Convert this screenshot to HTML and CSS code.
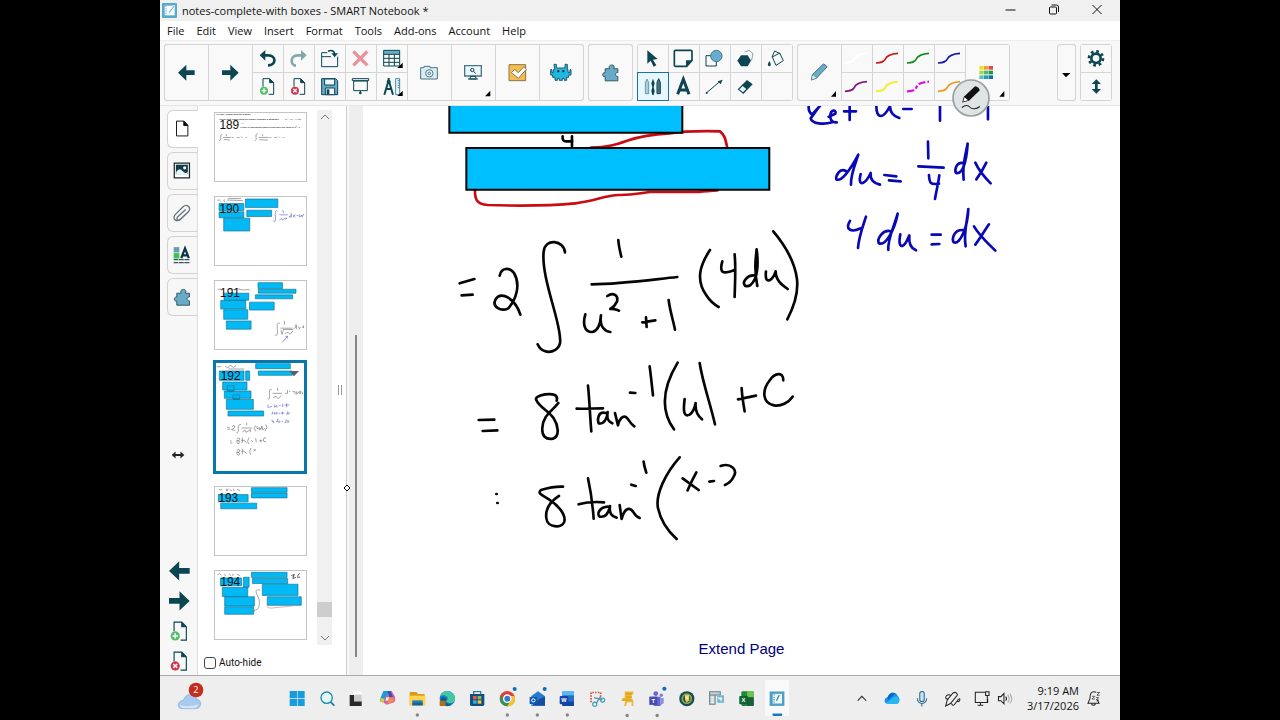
FILE: index.html
```html
<!DOCTYPE html>
<html lang="en">
<head>
<meta charset="utf-8">
<title>notes-complete-with boxes - SMART Notebook</title>
<link rel="stylesheet" href="styles.css">
</head>
<body>
<svg class="defs" aria-hidden="true">
  <defs>
    <g id="page-add"><path d="M5 26V2h20l12 12v35H22M25 2v12h12" class="line"/><path d="M25 2v12h12z" class="dark"/><circle cx="8" cy="38" r="12" fill="#52bf68"/><path d="M8 31v14M1 38h14" class="white"/></g>
    <g id="page-del"><path d="M5 26V2h20l12 12v35H22M25 2v12h12" class="line"/><path d="M25 2v12h12z" class="dark"/><circle cx="8" cy="38" r="12" fill="#cc3a52"/><path d="M3 33l10 10M13 33L3 43" class="white"/></g>
    <path id="arrow" d="M0 24L25 0v17h25v14H25v17z"/>
    <path id="puzzle" d="M9 13h14c-4-8 1-12 7-12s10 5 6 12h13v12c-10-1-10 13 0 12v14H9V38c-10 2-11-14 0-13z"/>
    <path id="swoosh" d="M0 31c14-1 24-2 28-12C32 9 40 4 66 2"/>
  </defs>
</svg>
<div class="window">
  <header class="titlebar">
    <svg class="app-icon" viewBox="6 10 45 45"><rect x="6" y="10" width="45" height="45" rx="3" fill="#56aacb"/><path d="M14 18h30v29H14z" fill="#fff"/><path d="M42 16L27 36l-4 7 7-4 15-20z" fill="#4b9cc0" stroke="#fff" stroke-width="2"/><path d="M18 18v29" stroke="#56aacb" stroke-width="3" stroke-dasharray="4 3"/></svg>
    <h1 class="title">notes-complete-with boxes - SMART Notebook *</h1>
    <div class="controls">
      <button class="ctl" aria-label="Minimize"><svg viewBox="0 0 42 21"><path d="M16 10h10"/></svg></button>
      <button class="ctl" aria-label="Restore"><svg viewBox="0 0 42 21"><rect x="17" y="7" width="7" height="7" rx="1"/><path d="M19 5h5q2 0 2 2v5"/></svg></button>
      <button class="ctl" aria-label="Close"><svg viewBox="0 0 42 21"><path d="M17 5l9 9M26 5l-9 9"/></svg></button>
    </div>
  </header>
  <nav class="menu">
    <button>File</button><button>Edit</button><button>View</button><button>Insert</button><button>Format</button><button>Tools</button><button>Add-ons</button><button>Account</button><button>Help</button>
  </nav>

  <div class="toolbar">
    <div class="group">
      <button class="cell big" aria-label="Previous page"><svg viewBox="15 135 129 165"><use href="#arrow" transform="translate(54 194)" class="dark"/></svg></button>
      <button class="cell big" aria-label="Next page"><svg viewBox="147 135 129 165"><use href="#arrow" transform="translate(236 194) scale(-1 1)" class="dark"/></svg></button>
      <div class="grid five">
        <button class="cell" aria-label="Undo"><svg viewBox="279 135 90 81"><path d="M310 166h15c24 0 25 30-1 30" fill="none" stroke="#0c4652" stroke-width="8"/><path d="M299 166l17-16v32z" class="dark"/></svg></button>
        <button class="cell" aria-label="Redo"><svg viewBox="372 135 90 81"><path d="M428 166h-15c-24 0-22 30-5 31" fill="none" stroke="#86a7a9" stroke-width="8"/><path d="M440 166l-17-16v32z" fill="#86a7a9"/></svg></button>
        <button class="cell" aria-label="Open"><svg viewBox="465 135 90 81"><path d="M502 158h-17v42h48v-30M485 170h28" class="line"/><path d="M504 154c12-6 20 0 20 9" fill="none" stroke="#0c4652" stroke-width="5"/><path d="M514 160h20l-10 12z" class="dark"/></svg></button>
        <button class="cell" aria-label="Delete"><svg viewBox="558 135 90 81"><path d="M580 154l42 42M622 154l-42 42" fill="none" stroke="#ea929b" stroke-width="10"/></svg></button>
        <button class="cell" aria-label="Table"><svg viewBox="651 135 90 81"><path d="M671 151h48v12h-48z" fill="#6aa9c8"/><path d="M671 151h48v47h-48zM671 163h48M671 175h48M671 187h48M687 163v35M703 163v35" class="line"/><path d="M728 188v16h-16z"/></svg></button>
        <button class="cell" aria-label="Add page"><svg viewBox="279 219 90 81"><use href="#page-add" transform="translate(304 234)"/></svg></button>
        <button class="cell" aria-label="Delete page"><svg viewBox="372 219 90 81"><use href="#page-del" transform="translate(397 234)"/></svg></button>
        <button class="cell" aria-label="Save"><svg viewBox="465 219 90 81"><path d="M485 236h42l6 6v42h-48z" fill="#67a9c9" stroke="#0c4652" stroke-width="3"/><path d="M494 237h30v18h-30zM496 264h28v20h-28z" fill="#f1f8fb" stroke="#0c4652" stroke-width="3"/><path d="M500 268h8v15h-8z" class="dark"/></svg></button>
        <button class="cell" aria-label="Screen shade"><svg viewBox="558 219 90 81"><path d="M577 236h49v6h-49zM581 243h41v29h-41zM601 272v6" class="line"/><circle cx="601" cy="279" r="4" class="dark"/></svg></button>
        <button class="cell" aria-label="Measurement tools"><svg viewBox="651 219 90 81"><path d="M686 234v10M685 244l-12 40M687 244l12 40M677 267h18" fill="none" stroke="#0c4652" stroke-width="6"/><circle cx="686" cy="245" r="6" class="dark"/><path d="M707 236h12v48h-12zM713 242h6M713 249h6M713 256h6M713 263h6" fill="#edf8fb" stroke="#478aa4" stroke-width="3"/><path d="M728 272v16h-16z"/></svg></button>
      </div>
      <button class="cell big" aria-label="Capture"><svg viewBox="744 135 129 165"><path d="M782 203h10v-4h18v4h22v34h-50z" fill="#dcecf2" stroke="#477684" stroke-width="3"/><circle cx="808" cy="220" r="11" fill="#eef8fb" stroke="#477684" stroke-width="3"/><circle cx="808" cy="220" r="4" fill="none" stroke="#477684" stroke-width="3"/></svg></button>
      <button class="cell big" aria-label="Display"><svg viewBox="876 135 129 165"><path d="M914 197h50v31h-50z" fill="#eef8fb" stroke="#477684" stroke-width="4"/><path d="M932 229h14l3 8h-20zM924 237h30" class="line"/><circle cx="937" cy="210" r="5" class="line"/><path d="M941 214l6 7" class="line"/><path d="M991 272v17h-16z"/></svg></button>
      <button class="cell big" aria-label="Assessment"><svg viewBox="19 135 129 165"><path d="M58 194h50v48H58z" fill="#f4bd51" stroke="#8d7548" stroke-width="3"/><path d="M65 218l10-10 11 10 17-18 7 8-24 27z" fill="#fff" stroke="#8d7548" stroke-width="3"/></svg></button>
      <button class="cell big" aria-label="Game activity"><svg viewBox="151 135 129 165"><path d="M193 193h7v11h26v-11h7v15h2v9h6v-8h3v16h-7v7h-6v9h-7v-6h-6v6h-9v-6h-6v6h-7v-9h-7v-7h-6v-16h4v8h5v-9h3z" fill="#22b8e0" stroke="#1e596f" stroke-width="3"/><path d="M203 210h6v7h-6zM218 210h6v7h-6z" fill="#073c50"/></svg></button>
    </div>
    <div class="group">
      <button class="cell big" aria-label="Add-ons"><svg viewBox="295 135 129 165"><use href="#puzzle" transform="translate(335 194) scale(.95)" class="piece"/></svg></button>
    </div>
    <div class="group">
      <div class="grid five">
        <button class="cell" aria-label="Select"><svg viewBox="443 135 90 81"><path d="M471 151l31 26-14 2 10 17-8 4-9-18-10 9z" class="dark"/></svg></button>
        <button class="cell" aria-label="Page"><svg viewBox="536 135 90 81"><path d="M555 151h47q3 0 3 3v27l-16 18h-34q-3 0-3-3v-42q0-3 3-3z" fill="none" stroke="#0c4652" stroke-width="5"/><path d="M587 200v-19h19z" class="dark"/></svg></button>
        <button class="cell" aria-label="Shapes"><svg viewBox="630 135 90 81"><path d="M648 167h31v31h-31z" class="line"/><circle cx="679" cy="168" r="17" fill="#66add0" stroke="#477684" stroke-width="3"/></svg></button>
        <button class="cell" aria-label="Polygons"><svg viewBox="723 135 90 81"><path d="M764 156l13-5 12 10-4 19-12 3" fill="none" stroke="#477684" stroke-width="2"/><path d="M753 166h20l10 16-10 17h-20l-11-17z" class="dark"/></svg></button>
        <button class="cell" aria-label="Fill"><svg viewBox="816 135 90 81"><path d="M847 171l22-12 11 23-22 14zM846 171l8-18 16 8" class="line"/><path d="M838 183q-9 14 0 16 9-2 0-16z" class="dark"/></svg></button>
        <button class="cell active" aria-label="Pens"><svg viewBox="442 219 90 81"><path d="M469 237l5 10v34h-10v-34z" fill="#a4cfe1" stroke="#477684" stroke-width="2"/><path d="M487 236l5 14-3 12 3 11-3 12h-4l-3-12 3-11-3-12z" class="dark"/><path d="M504 236l5 11v34h-10v-34z" fill="#54757d" stroke="#0c4652" stroke-width="3"/></svg></button>
        <button class="cell" aria-label="Text"><svg viewBox="536 219 90 81"><path d="M562 283l17-45 17 45M567 270h24" fill="none" stroke="#0c4652" stroke-width="9"/></svg></button>
        <button class="cell" aria-label="Lines"><svg viewBox="630 219 90 81"><path d="M649 279l40-34" class="line"/><path d="M698 239l-6 14-9-9z" class="dark"/><circle cx="650" cy="279" r="3" class="dark"/></svg></button>
        <button class="cell" aria-label="Eraser"><svg viewBox="723 219 90 81"><path d="M743 268l28-28 17 13-28 29z" class="dark"/><path d="M748 268l10-10 11 9-10 10z" fill="#e9f6fa"/></svg></button>
        <span class="cell"></span>
      </div>
    </div>
    <div class="group palette">
      <button class="cell big" aria-label="Pen types"><svg viewBox="-7 135 129 165"><path d="M33 240l4-17 32-31q7 1 11 9l-31 33z" fill="#69abc9" stroke="#477684" stroke-width="3"/><path d="M37 223l12 11-16 6z" fill="#edf8fb" stroke="#477684" stroke-width="2"/><path d="M107 273v17H92z"/></svg></button>
      <div class="grid four">
        <button class="cell" aria-label="White pen"><svg viewBox="124 135 90 81"><use href="#swoosh" class="pen p-white" transform="translate(133 158)"/></svg></button>
        <button class="cell" aria-label="Red pen"><svg viewBox="217 135 90 81"><use href="#swoosh" class="pen p-red" transform="translate(226 158)"/></svg></button>
        <button class="cell" aria-label="Green pen"><svg viewBox="310 135 90 81"><use href="#swoosh" class="pen p-green" transform="translate(319 158)"/></svg></button>
        <button class="cell" aria-label="Blue pen"><svg viewBox="403 135 90 81"><use href="#swoosh" class="pen p-blue" transform="translate(412 158)"/></svg></button>
        <button class="cell" aria-label="Purple pen"><svg viewBox="124 219 90 81"><use href="#swoosh" class="pen p-purple" transform="translate(133 243)"/></svg></button>
        <button class="cell" aria-label="Yellow highlighter"><svg viewBox="217 219 90 81"><use href="#swoosh" class="pen p-yellow" transform="translate(226 243)"/></svg></button>
        <button class="cell" aria-label="Dashed magenta pen"><svg viewBox="310 219 90 81"><use href="#swoosh" class="pen p-magenta" transform="translate(319 243)"/></svg></button>
        <button class="cell" aria-label="Orange pen"><svg viewBox="403 219 90 81"><use href="#swoosh" class="pen p-orange" transform="translate(412 243)"/></svg></button>
      </div>
      <button class="cell big" aria-label="Colors"><svg viewBox="498 135 129 165"><path d="M538 198h13v11h-13z" fill="#e8e32b"/><path d="M552 198h13v11h-13z" fill="#ef9a45"/><path d="M566 198h13v11h-13z" fill="#dc4d43"/><path d="M538 212h13v11h-13z" fill="#a8d454"/><path d="M552 212h13v11h-13z" fill="#55b95b"/><path d="M566 212h13v11h-13z" fill="#1d9a46"/><path d="M538 226h13v11h-13z" fill="#60bfb3"/><path d="M552 226h13v11h-13z" fill="#2799bb"/><path d="M566 226h13v11h-13z" fill="#176da4"/><path d="M613 273v17h-15z"/></svg></button>
      <svg class="pen-cursor" viewBox="457 238 112 112"><circle cx="513" cy="294" r="53" fill="#dfe4e4" stroke="#9a9f9f" stroke-width="5"/><path d="M487 307l5-17 33-31q11 2 14 12l-32 31z" fill="#101010"/><path d="M490 304l4-12 10 9z" fill="#fff"/><path d="M486 322c13-10 20-6 25 0s18 5 28-3" fill="none" stroke="#222" stroke-width="3"/></svg>
    </div>
    <div class="group right">
      <button class="cell narrow" aria-label="More tools"><svg viewBox="777 135 51 165"><path d="M789 219h25l-13 13z"/></svg></button>
    </div>
    <div class="group">
      <div class="grid">
        <button class="cell" aria-label="Settings"><svg viewBox="844 135 90 81"><circle cx="889" cy="175" r="14" fill="none" stroke="#0c4652" stroke-width="8"/><circle cx="889" cy="175" r="21" fill="none" stroke="#0c4652" stroke-width="8" stroke-dasharray="8 8.5"/></svg></button>
        <button class="cell" aria-label="Move toolbar"><svg viewBox="844 219 90 81"><path d="M890 238l14 14h-10v15h10l-14 14-14-14h10v-15h-10z" class="dark"/></svg></button>
      </div>
    </div>
  </div>

  <main class="work">
    <aside class="rail">
      <div class="tabs">
        <button class="tab on" aria-label="Page sorter"><svg viewBox="24 30 90 114"><path d="M50 62h24l12 12v35H50zM73 62v14h13" fill="none" stroke="#111" stroke-width="3"/><path d="M73 62v14h13z"/></svg></button>
        <button class="tab" aria-label="Gallery"><svg viewBox="24 156 90 114"><path d="M43 188h48v47H43z" fill="#fff" stroke="#1c2a2e" stroke-width="4"/><path d="M48 193h38v30H48z" fill="#123a47"/><path d="M49 216q10-15 20-3t16 2v9H49z" fill="#e9f6fa"/><circle cx="76" cy="203" r="5" fill="#fff"/></svg></button>
        <button class="tab" aria-label="Attachments"><svg viewBox="24 282 90 114"><path d="M79 328l-25 23c-7 8 2 15 9 8l24-23c13-13-4-28-17-16l-24 24c-12 15 5 25 17 14l20-19" fill="none" stroke="#65757a" stroke-width="4"/></svg></button>
        <button class="tab" aria-label="Properties"><svg viewBox="24 408 90 114"><path d="M41 440h18v17H41z" fill="#679eb4"/><path d="M41 459h18v17H41z" fill="#3bc154"/><path d="M65 475l12-31 12 31M69 466h16" fill="none" stroke="#0c3644" stroke-width="7"/><path d="M41 480h52M41 489h52" stroke="#36535b" stroke-width="4" stroke-dasharray="15 2"/></svg></button>
        <button class="tab" aria-label="Add-ons"><svg viewBox="24 10 90 114"><use href="#puzzle" class="piece" transform="translate(42 42)"/></svg></button>
      </div>
      <button class="swap" aria-label="Move sidebar"><svg viewBox="0 0 40 24"><path d="M2 12L13 2v7h14V2l11 10-11 10v-7H13v7z" fill="#222"/></svg></button>
      <div class="page-actions">
        <button aria-label="Previous page"><svg viewBox="0 0 62 60"><path d="M0 30L30 1v20h31v17H30v20z" class="dark"/></svg></button>
        <button aria-label="Next page"><svg viewBox="0 0 62 60"><path d="M61 30L31 1v20H0v17h31v20z" class="dark"/></svg></button>
        <button aria-label="Add page"><svg viewBox="0 0 62 66"><use href="#page-add" transform="translate(9 4) scale(1.15)"/></svg></button>
        <button aria-label="Delete page"><svg viewBox="0 0 62 66"><use href="#page-del" transform="translate(9 4) scale(1.15)"/></svg></button>
      </div>
    </aside>

    <section class="sorter">
      <div class="list">
        <div class="thumbs">
          <button class="thumb" aria-label="Page 189"><svg viewBox="165 40 273 206">
            <text x="168" y="47" class="tiny bold">Fri-day: Completing the Square</text>
            <text x="177" y="60" class="tiny bold">Recall that completing the square changes a quadratic</text><text x="375" y="60" class="tiny">px² + bx + c into</text>
            <text x="240" y="73" class="tiny">+ c</text><text x="240" y="86" class="tiny bold">e have a few antiderivatives that have the form of x² + 1</text>
            <text x="177" y="90" class="num">189</text>
            <g class="hand dim"><path d="M186 104q-8 2-5 10t-5 10M188 114h24M198 104v6M191 120l18 2M293 102q-8 2-5 11t-4 12M296 114h30M308 104v6M298 121l26 1"/></g>
            <text x="214" y="116" class="tiny">dx = tan⁻¹x + C</text><text x="328" y="116" class="tiny">dx = sin⁻¹x + C</text></svg></button>
          <button class="thumb" aria-label="Page 190"><svg viewBox="165 291 273 206">
            <g class="box"><path d="M176 311h75v21h-75zM256 297h98v26h-98zM260 331h75v19h-75zM176 336h75v18h-75zM190 355h79v39h-79z"/></g>
            <path class="hand dim" d="M171 302l5-3 5 5M192 298q-5 5 3 8m5-6l48 2m-45-7l40 1"/>
            <path class="hand blue" d="M353 334c-8-8-7 12-6 24 0 9-4 10-7 4M369 330l2 10M359 345h25M359 361l6-5 3 5 7-5 7-1M376 359l5-4M393 346l-5 6 8-1-2-12M400 345l7 6M407 344l-7 8M411 347h5M420 344v8l7-7v7l6-9"/>
            <text x="177" y="339" class="num">190</text></svg></button>
          <button class="thumb" aria-label="Page 191"><svg viewBox="165 15 273 206">
            <g class="box"><path d="M294 20h74v18h-74zM295 40h114v12h-114zM286 57h113v12h-113zM191 52h75v21h-75zM181 74h76v26h-76zM268 79h75v24h-75zM190 102h73v29h-73zM198 136h75v25h-75z"/></g>
            <path class="hand dim" d="M172 40h10M202 41l10-3 10 4 8-4 18 4 20-1M360 143c-12-3-7 12-7 25 0 12-3 13-8 10M374 136v12M362 158h36M363 164l4 13 4-15h29M376 174l9-4 6 6 9-10M401 160l8-6v-7l2 14M414 153l7 6M417 162l6-7M427 155h6M432 149v8"/><path class="hand blue" d="M368 201l15-19-6 1M383 182l1 7"/>
            <text x="179" y="63" class="num">191</text></svg></button>
          <button class="thumb current" aria-label="Page 192"><svg viewBox="170 265 264 324">
            <g class="box"><path d="M289 267h104v15H289zM297 289h102v13H297zM180 289h74v28h-74zM259 289h12v28h-12zM190 322h73v24h-73zM195 349h80v22h-80zM201 374h81v30h-81zM206 409h107v15H206zM204 333h20v17h-20zM221 361h20v13h-20z"/></g>
            <path d="M390 289h29l-15 16z" fill="#53646a"/>
            <path class="hand dim" d="M172 276h14M198 275l7 5 8-8 9 6 8-5M207 283h47M337 345c-8-6-7 10-6 20 0 8-2 10-6 7M355 339v10M340 356h28M342 369l8-4 6 7 10-9M377 356l8 0-1-10M389 350h4M399 351h8v8M412 350v9l8-9v8M424 348v10M429 351v8M203 459h8M204 464h8M218 456q10-9 7 4l-9 5 12 2M245 450q-9-3-8 12t-6 12M262 444v8M247 460h32M249 472l8-6 3 7 12-7M273 463v10M288 452q-6 10 1 18M293 454v8l7-3v8M306 460q-8 3-2 5l4-11 2 12 7-6M319 449q8 10-2 20M212 499h5M213 505h6M233 493q8-7 8 1t-9 4q1 12 7 9t-4-11M249 489v16M246 497h8l8 7M269 488q-8 13-1 20M276 496l5 6M289 490l2 13M300 498h9M304 494v9M320 489q-8-1-8 7t8 4M233 527q8-7 8 1t-9 4q1 12 7 9t-4-11M249 522v17M246 530h9l7 8M275 520q-8 11-1 20M283 523l6 7M289 523l-6 7"/>
            <path class="hand blue" d="M326 390q-2 12 5 7l7-2M346 390v8l7-6v7M359 393h5M370 387v10M375 391h15M382 386v12M336 418h4v-7M346 412v7l7-6v7M358 416h5M369 411v9M366 415h9M380 418h5v-8M390 412l-3 8M338 435v5h5v6M350 441h5v-9M359 437v7l4-4M367 440h4M375 443h5v-9M389 437l-5 7M384 437l5 7"/>
            <text x="184" y="315" class="num">192</text></svg></button>
          <button class="thumb" aria-label="Page 193"><svg viewBox="165 20 273 206">
            <g class="box"><path d="M274 22h108v14H274zM274 38h108v15H274zM174 43h90v22h-90zM181 69h109v17H181z"/></g>
            <path class="hand dim" d="M175 27l6 2 5-3M198 25v7M203 25l-2 8M208 27l7 5M219 25l3 7M230 27l10 4"/><text x="174" y="66" class="num">193</text></svg></button>
          <button class="thumb" aria-label="Page 194"><svg viewBox="165 270 273 206">
            <g class="box"><path d="M274 274h108v16H274zM277 293h107v15H277zM307 310h108v34H307zM322 348h103v26H322zM180 291h64v24h-64zM250 289h17v30h-17zM186 320h77v27h-77zM193 348h90v28h-90zM193 378h88v23h-88z"/></g>
            <path class="hand dim" d="M171 281l6-3 6 4M194 279v7M206 278l7 7M218 278v7M230 280l10 4M301 328c-15-4-16 3-8 18s8 38-6 42-8 6-4 5"/><path class="hand" d="M394 284l8-3-3 11M404 279l-3 14 8-4M421 277q-8 3-7 13l8-2"/><path class="hand rose" d="M322 377q-1 8 24 4l35-3 27-4"/><text x="180" y="315" class="num">194</text></svg></button>
        </div>
        <div class="scroll"><svg viewBox="0 0 15 14"><path d="M4 9l4-4 4 4"/></svg><span class="grip"></span><svg viewBox="0 0 15 14"><path d="M4 5l4 4 4-4"/></svg></div>
        <span class="handle"></span>
      </div>
      <label class="autohide"><input type="checkbox"> <span>Auto-hide</span></label>
    </section>
    <div class="splitter"><span class="track"></span>
      <svg class="diamond" viewBox="0 0 8 8"><path d="M4 1l3 3-3 3-3-3z"/></svg>
    </div>

    <section class="canvas">
      <svg class="ink" viewBox="363 106 757 524" role="img" aria-label="Handwritten integration steps">
        <g transform="translate(440 100) scale(.3333)">
          <path d="M453 143c50-1 75-9 108-21 47-16 90-20 128-22 50-8 102-7 151-6 15 11 17 27 22 50M105 269c-1 28 4 43 38 46 91 3 170 4 263-5 61-7 88-24 130-25 40 1 60-5 94-9h130c23 0 42-3 72-5" class="stroke red"/>
          <path d="M368 109q-2 16 12 15h17M396 109v30" class="stroke"/>
          <path d="M28-10h699V98H28zM79 144h909v125H79z" fill="#00bfff" stroke="#050505" stroke-width="6"/>
        </g>
        <g transform="translate(780 100) scale(.3333)" class="stroke blue">
          <path d="M87 14c-3 13 0 23 9 30l28-31M124 13c-12 12-20 27-32 42 4 16 39 20 64 12M146 50l20-9c4-11-10-13-14-1-4 15 2 28 18 27M209 15v45M192 34h36M289 17c0 22 5 32 15 31 12-2 20-18 26-30 0 18 8 30 28 36M370 27h25M480 16v46M624 16v42"/>
          <path d="M198 213c-21-10-31 17-29 25 14 8 39-23 66-74-8 24-24 62-22 90M242 222c-5 18-3 29 6 27 10-3 17-15 24-30-2 18 8 30 28 35M313 225l36 4M327 241l35 3M444 125l1 50M415 199l76 4M447 225c1 23 3 30 30 26M478 226c-4 30-9 46-13 71M551 189c-24-4-27 22-23 30 18 4 31-25 35-88-7 35-17 66-12 108M586 188c13 29 30 46 46 62M619 188c-10 21-18 34-30 50"/>
          <path d="M210 363c-15 23 1 37 32 22M258 350c-10 31-21 58-24 94M333 394c-24-7-42 22-37 35 20 12 48-40 57-88-12 42-31 78-28 109M361 403c-5 26-2 37 8 34 10-5 14-21 19-31-2 24 4 39 20 45M455 404h27M455 433l23-1M548 390c-26-1-33 25-27 37 20 9 43-50 44-100-4 43-15 73-8 112M582 379c17 29 43 52 64 73M627 373c-14 20-27 43-41 61"/>
        </g>
        <g transform="translate(450 225) scale(.3333)" class="stroke">
          <path d="M29 175l44-13M35 211l33-2M149 152c5-25 29-26 43-8 21 35 6 80-17 106-22 11-49-4-39-25 17-32 61-1 75 44M345 82c-2-35-60-46-64-2-8 76 48 202 49 260 6 34-28 45-46 38-10-2-16-9-21-20M505 45c1 18 5 34 9 50M425 178c87-1 171-13 257-22M472 213c18-12 34-2 29 17-5 11-13 18-20 22 12-2 16 2 26 5M406 268c-8 27-4 54 21 53 15-3 24-24 26-50-4 26 4 46 28 50M577 292l39-6M588 277l2 29M656 225c4 34 14 62 19 89M780 75c-31 47-43 90-11 136 9 14 22 27 37 35M817 109c-10 36 2 40 38 25M854 88c4 42 1 84 0 128M917 152c-26-5-41 20-32 30 22 9 46-27 35-109-4 35-7 62 2 110M948 140c-2 20 1 30 12 25 8-4 13-14 17-26 1 27 17 40 36 53M970 19c36 43 64 89 71 143 5 43-8 81-29 121"/>
        </g>
        <g transform="translate(460 355) scale(.3333)" class="stroke">
          <path d="M56 195l47-1M68 228l44-2M290 137c5-17-9-22-35-19-21 4-30 10-26 17 9 22 36 31 52 55 13 20 20 53-2 61-22 4-34-9-32-32 1-37 30-51 48-75M384 92c5 49 6 92 10 137M350 161c25 1 53-1 79-1M437 174c-23-7-25 20-21 31 18 4 26-18 27-34-3 22 2 30 14 34M465 174l9 37c2-17 15-32 25-24 8 6 10 18 24 27M510 113l16 1M569 34c4 30 7 59 10 87M653 23c-35 58-61 131-11 200M674 132c-5 38-2 55 15 47 12-9 16-24 18-35-2 22 3 36 19 49M719 24c9 59 32 122 46 184M834 133l54-11M845 99c1 24 5 47 9 70M970 76c0-28-26-21-40-1-26 32-22 70 12 76 20 4 44-8 56-26"/>
          <path d="M109 417h1M112 444h1M309 395c-27-1-46 4-66 10-13 12 7 16 25 29 27 18 50 44 45 66-7 22-52 18-54-11-4-30 15-51 38-66M384 370c8 36 14 79 17 121M356 448c28-8 52-8 76-6M444 455c-27 1-34 24-25 30 20 3 28-15 31-32-3 22 4 30 20 35M479 450l6 42c7-27 21-40 34-22 6 10 9 15 20 19M514 389l13 4M551 320c1 13 5 23 8 33M659 307c-42 47-73 111-65 152 8 38 26 66 56 93M668 370l48 35M709 352c-11 20-19 37-26 54M748 380l14-2M782 333c29-10 54 10 38 34-5 11-13 18-25 23"/>
        </g>
      </svg>
      <div class="extend"><button>Extend Page</button></div>
    </section>
  </main>

  <footer class="taskbar">
    <button class="weather" aria-label="Weather"><svg viewBox="50 0 90 132"><path d="M70 98c-21 0-15-25 3-25 3-22 35-24 39-3 18 2 15 28-3 28z" fill="#a9caf0" stroke="#7ca8db" stroke-width="2"/><path d="M62 87q25 8 55-2-3 11-13 12H70q-7-1-8-10z" fill="#d6e5f7"/><circle cx="110" cy="42" r="22" fill="#c42c1b"/><text x="110" y="52" class="badge">2</text></svg></button>
    <div class="pins">
      <button aria-label="Start"><svg viewBox="367 0 90 132"><path d="M390 45h22v22h-22zM414 45h21v22h-21zM390 69h22v21h-22zM414 69h21v21h-21z" fill="#199be0"/></svg></button>
      <button aria-label="Search"><svg viewBox="457 0 90 132"><circle cx="501" cy="65" r="17" fill="#e5f7f4" stroke="#198cae" stroke-width="4"/><path d="M513 78l11 11" stroke="#1770b8" stroke-width="5"/></svg></button>
      <button aria-label="Task view"><svg viewBox="547 0 90 132"><path d="M581 46h25v29h-25z" fill="#fff"/><path d="M570 57h13v19h23v14h-36z" fill="#292929"/><path d="M583 56h23v20h-23z" fill="#ccc"/></svg></button>
      <button aria-label="Copilot"><svg viewBox="637 0 90 132"><path d="M671 45h22l-12 33h-18q-5-6 0-13z" fill="#159ed0"/><path d="M687 45h9l10 17q4 18-10 19l-15 5-10-7z" fill="#dc5aa1"/><path d="M663 66l12 2-5 14-8-8z" fill="#eac72f"/><path d="M687 65h17l-4 12-17 7z" fill="#f38c4a"/><path d="M683 45h10l7 18h-11z" fill="#2859bd"/><path d="M680 64h8l-3 10h-8z" fill="#eee"/></svg></button>
      <button aria-label="File Explorer"><svg viewBox="727 0 90 132"><path d="M750 48h20l5 6h20v34h-45z" fill="#d99b18"/><path d="M750 59h47v29h-47z" fill="#ffd34c"/><path d="M758 73h31v15h-31z" fill="#267fba"/><path d="M758 80h31v8h-31z" fill="#0f649e"/><circle class="run" cx="773" cy="117" r="5"/></svg></button>
      <button aria-label="Edge"><svg viewBox="817 0 90 132"><circle cx="863" cy="68" r="23" fill="#167cba"/><path d="M841 61c7-25 45-20 45 7 0 15-18 16-27 9 14-12-3-25-18-16z" fill="#42c9a4"/><path d="M848 63q-11 18 7 27l22-3q-24-3-17-19z" fill="#0a559c"/><path d="M840 74h18v16h-18z" fill="#ad711c"/></svg></button>
      <button aria-label="Microsoft Store"><svg viewBox="907 0 90 132"><path d="M931 54h43v31q0 5-5 5h-33q-5 0-5-5z" fill="#114f7f"/><path d="M942 54v-7h21v7" fill="none" stroke="#2382b4" stroke-width="4"/><path d="M940 60h11v10h-11z" fill="#ef5541"/><path d="M954 60h11v10h-11z" fill="#8abe45"/><path d="M940 73h11v10h-11z" fill="#3aaae1"/><path d="M954 73h11v10h-11z" fill="#f5c540"/></svg></button>
      <button aria-label="Chrome"><svg viewBox="997 0 90 132"><circle cx="1043" cy="68" r="23" fill="#d94236"/><path d="M1023 57q-8 30 20 34l10-17-10 5q-12-2-14-12z" fill="#249b52"/><path d="M1043 91l10-18 1-13h11q6 30-22 31z" fill="#f5c42c"/><circle cx="1043" cy="68" r="11" fill="#3578d5" stroke="#fff" stroke-width="4"/><circle class="note" cx="1065" cy="39" r="6"/><circle class="run" cx="1043" cy="117" r="5"/></svg></button>
      <button aria-label="Outlook"><svg viewBox="1087 0 90 132"><path d="M1114 61l21-15 21 15v28h-42z" fill="#267bd1"/><path d="M1114 61l23 14 19-14v28h-42z" fill="#65c2f0"/><path d="M1133 73l23-12v28h-40z" fill="#174da0"/><path d="M1110 63h22v21h-22z" fill="#0d58b0"/><circle cx="1121" cy="73" r="5" fill="none" stroke="#fff" stroke-width="3"/><circle class="note" cx="1155" cy="39" r="6"/><circle class="run" cx="1133" cy="117" r="5"/></svg></button>
      <button aria-label="Word"><svg viewBox="1177 0 90 132"><rect x="1208" y="45" width="35" height="45" rx="3" fill="#226fcc"/><path d="M1208 45h35v13h-35z" fill="#60b7ed"/><path d="M1208 77h35v13h-35z" fill="#1146a0"/><rect x="1200" y="60" width="26" height="25" rx="3" fill="#1546a3"/><text x="1213" y="79" class="logo">W</text><circle class="run" cx="1223" cy="117" r="5"/></svg></button>
      <button aria-label="Snipping Tool"><svg viewBox="8 2 87 128"><path d="M34 78V50h28v12" fill="none" stroke="#c9483b" stroke-width="5" stroke-dasharray="4 4"/><path d="M43 65l24 6M49 82l13-20" stroke="#5d8fa2" stroke-width="4"/><circle cx="45" cy="84" r="6" fill="none" stroke="#3398bc" stroke-width="3"/><circle cx="68" cy="72" r="6" fill="none" stroke="#3398bc" stroke-width="3"/></svg></button>
      <button aria-label="Lumio"><svg viewBox="95 2 87 128"><path d="M132 47h25v9h-5v18h5v15h-5V78h-13l-4 11h-5l4-14h-12l4-9 6-1z" fill="#efb52c"/><path d="M135 54h18M136 63h17M126 72h30" stroke="#d99a16" stroke-width="3"/><circle class="run" cx="139" cy="117" r="5"/></svg></button>
      <button aria-label="Teams"><svg viewBox="182 2 87 128"><circle cx="222" cy="53" r="7" fill="#6468cf"/><circle cx="238" cy="58" r="5" fill="#7f83d8"/><path d="M211 62h25v27h-18q-7-3-7-9z" fill="#6267cf"/><path d="M236 66h9v15l-8 5z" fill="#8b8ee3"/><path d="M203 62h23v24h-23z" fill="#444bb2"/><text x="215" y="80" class="logo">T</text><circle class="note" cx="247" cy="39" r="6"/><circle class="run" cx="226" cy="117" r="5"/></svg></button>
      <button aria-label="Camera app"><svg viewBox="269 2 87 128"><circle cx="312" cy="68" r="22" fill="#174d50"/><circle cx="312" cy="68" r="13" fill="none" stroke="#8fa84e" stroke-width="5"/><path d="M306 57h13v17l-8 4-4-6z" fill="#e7cb58"/><circle cx="312" cy="65" r="5" fill="#f7e694"/></svg></button>
      <button aria-label="Phone Link"><svg viewBox="356 2 87 128"><path d="M378 48h31v9h-31zM378 57h16v27h-16z" fill="#c7d4d6" stroke="#687d83" stroke-width="3"/><path d="M400 58h20v22h-20z" fill="#74b9d4"/><path d="M405 63v5h10M411 63v12M383 64h7M383 71h7M383 78h7" fill="none" stroke="#fff" stroke-width="3"/></svg></button>
      <button aria-label="Excel"><svg viewBox="443 2 87 128"><rect x="470" y="46" width="36" height="43" rx="4" fill="#26853e"/><path d="M487 46h19v18h-19z" fill="#6ec54d"/><path d="M487 64h19v25h-19z" fill="#165f39"/><rect x="464" y="60" width="25" height="24" rx="2" fill="#116332"/><text x="476" y="79" class="logo">X</text></svg></button>
      <button class="open" aria-label="SMART Notebook"><svg viewBox="530 2 87 128"><path d="M552 47h43v42h-43z" fill="#4f9fc5"/><path d="M561 54h27v28h-27z" fill="#eaf8fb"/><path d="M580 57l-8 17" stroke="#356b85" stroke-width="3"/><path d="M565 55v27" stroke="#60a8c9" stroke-width="4" stroke-dasharray="4 3"/><rect x="560" y="111" width="29" height="7" rx="3" fill="#1679bd"/></svg></button>
    </div>
    <div class="tray">
      <button aria-label="Hidden icons"><svg viewBox="776 2 87 128"><path d="M807 74l12-13 13 13" class="tr"/></svg></button>
      <button aria-label="OneDrive"><svg viewBox="863 2 87 128"><path d="M895 83c-15-1-12-18 0-20 5-20 25-14 28-3 7 5 7 20-3 23z" fill="#1a91e8"/><path d="M890 80l26-19q13 2 12 12 0 10-10 10h-25z" fill="#24b8f1"/><path d="M893 65q7-18 23-12l-20 19z" fill="#1268c0"/></svg></button>
      <button aria-label="Microphone"><svg viewBox="950 2 87 128"><rect x="987" y="47" width="13" height="29" rx="6" fill="#c8e4f2" stroke="#25658b" stroke-width="3"/><path d="M980 67c0 20 27 20 27 0M993 83v8" fill="none" stroke="#25658b" stroke-width="3"/></svg></button>
      <button aria-label="Pen"><svg viewBox="1037 2 87 128"><path d="M1062 89l5-18 16-19q9-6 13 3 1 4-4 8l-16 19zM1070 70q-12-2-6-10 6-6 12-2M1079 82q4 10 11 0l9-12q6-4 4 3-3 6-7 2" class="tr"/></svg></button>
      <button aria-label="Network"><svg viewBox="1124 2 87 128"><path d="M1177 49h-29v30h36V69M1163 79v8M1155 87h16M1178 48h10v11h-10zM1183 59v20" class="tr"/></svg></button>
      <button class="tight" aria-label="Volume"><svg viewBox="1208 2 49 128"><path d="M1212 62h7l9-9v30l-9-9h-7zM1233 62q5 6 0 12" class="tr"/><path d="M1239 57q8 11 0 22M1245 54q12 14 0 28" fill="none" stroke="#aaa" stroke-width="3"/></svg></button>
      <button class="clock"><time>9:19 AM</time><time>3/17/2026</time></button>
      <button aria-label="Notifications"><svg viewBox="1450 2 87 128"><path d="M1500 49c-16-5-19 8-18 18l-6 14h32l-5-10M1486 83q6 8 12 0" class="tr"/><path d="M1488 61h8l-8 8h8M1502 50h8l-8 8h8M1499 65h8l-7 7h8" fill="none" stroke="#222" stroke-width="2"/></svg></button>
    </div>
  </footer>
</div>
</body>
</html>
```
FILE: styles.css
```css
* { box-sizing: border-box; }
body { margin: 0; padding: 0 12.5%; background: #000; color: #111; font: 11px/16px "Open Sans", "Noto Sans", sans-serif; }
button { border: 0; padding: 0; margin: 0; background: none; color: inherit; font: inherit; }
svg { display: block; }
.defs { display: none; }
.window { display: flex; flex-direction: column; height: 100vh; background: #f8f8f8; }

.dark { fill: #0c4652; }
.line { fill: none; stroke: #0c4652; stroke-width: 3; }
.white { fill: none; stroke: #fff; stroke-width: 4; }
.piece { fill: #68abc9; stroke: #32515b; stroke-width: 3; }

.titlebar { display: flex; align-items: center; height: 21px; flex: none; padding-left: 2px; background: #f0f0f0; }
.app-icon { width: 15px; height: 15px; margin-right: 5px; }
.title { margin: 0; font-size: 11px; font-weight: 400; }
.controls { display: flex; margin-left: auto; padding-right: 2px; }
.ctl svg { width: 43px; height: 21px; fill: none; stroke: #111; stroke-width: 1; }
.menu { display: flex; flex: none; gap: 12px; height: 19px; padding-left: 7px; background: #fff; align-items: center; font-size: 11px; }

.toolbar { display: flex; flex: none; gap: 4px; padding: 3px 8px 4px 4px; border-top: 1px solid #eee; border-bottom: 1px solid #e6e6e6; }
.group { position: relative; display: flex; gap: 1px; padding: 1px; border-radius: 3px; background: #d5d5d5; }
.group.right { margin-left: auto; }
.grid { display: grid; gap: 1px; }
.five { grid-template-columns: repeat(5, 30px); }
.four { grid-template-columns: repeat(4, 30px); }
.cell { width: 30px; height: 27px; background: #f9f9f9; }
.cell svg { width: 100%; height: 100%; }
.big { width: 43px; height: 55px; }
.narrow { width: 17px; height: 55px; }
.group > .cell:first-child { border-radius: 3px 0 0 3px; }
.group > .cell:last-child { border-radius: 0 3px 3px 0; }
.group > .cell:only-child { border-radius: 3px; }
.active { background: #e8f7fd; outline: 1px solid #1673a7; }
.pen { fill: none; stroke-width: 5; }
.p-white { stroke: #fff; stroke-width: 6; }
.p-red { stroke: #c41b1b; }
.p-green { stroke: #138a20; }
.p-blue { stroke: #1414b4; }
.p-purple { stroke: #7a187e; }
.p-yellow { stroke: #f5ee32; stroke-width: 6; }
.p-magenta { stroke: #d719d7; stroke-width: 7; stroke-dasharray: 22 6 10 6; }
.p-orange { stroke: #f09b25; }
.pen-cursor { position: absolute; z-index: 2; right: 20px; top: 35px; width: 38px; height: 38px; }

.work { display: flex; flex: 1; min-height: 0; }
.rail { display: flex; flex: none; flex-direction: column; align-items: flex-end; width: 38px; border-right: 1px solid #ddd; background: #f7f7f7; padding-top: 4px; }
.tabs { display: flex; flex-direction: column; gap: 4px; }
.tab { width: 30px; height: 38px; border: 1px solid #d2d2d2; border-right: 0; border-radius: 6px 0 0 6px; }
.tab svg { width: 29px; height: 36px; }
.tab.on { width: 31px; margin-right: -1px; background: #fff; }
.swap { margin: auto 12px 100px; }
.swap svg { width: 14px; height: 10px; }
.page-actions { display: grid; gap: 8px; padding: 0 7px 3px 0; }
.page-actions svg { width: 21px; height: 22px; }

.sorter { display: flex; flex: none; flex-direction: column; width: 149px; background: #fff; border-right: 1px solid #ccc; }
.list { display: flex; flex: 1; min-height: 0; align-items: flex-start; padding-top: 4px; }
.thumbs { display: flex; flex-direction: column; align-items: center; gap: 14px; width: 94px; margin-left: 15px; padding-top: 2px; }
.thumb { flex: none; width: 93px; height: 70px; border: 1px solid #c4c4c4; background: #fff; }
.thumb svg { width: 100%; height: 100%; }
.thumb.current { width: 94px; height: 114px; margin: -4px 0 -2px; border: 3px solid #0877a9; }
.tiny { font: 7px "Liberation Sans", sans-serif; fill: #333; }
.bold { font-weight: 700; }
.num { font: 36px "Liberation Sans", sans-serif; fill: #111; }
.box { fill: #00b9f5; stroke: #187492; stroke-width: 2; }
.hand { fill: none; stroke: #333; stroke-width: 2; }
.hand.dim { stroke: #777; }
.hand.blue { stroke: #6464ca; }
.hand.rose { stroke: #d9848a; }
.scroll { display: flex; flex-direction: column; justify-content: space-between; width: 15px; height: 535px; margin-left: 10px; background: #f0f0f0; }
.scroll svg { width: 15px; height: 14px; fill: none; stroke: #777; stroke-width: 1; }
.grip { height: 15px; margin: auto 0 14px; background: #cdcdcd; }
.handle { align-self: flex-start; width: 4px; height: 10px; margin: 275px 0 0 6px; border: solid #999; border-width: 0 1px; }
.autohide { display: flex; align-items: center; gap: 3px; height: 24px; padding-left: 6px; font: 10px/16px Roboto, sans-serif; }
.autohide input { appearance: none; width: 12px; height: 12px; margin: 0; border: 1px solid #444; border-radius: 3px; background: #fff; }
.splitter { position: relative; display: flex; flex: none; justify-content: center; width: 16px; border-left: 2px solid #f8f8f8; background: #eee; }
.track { width: 2px; margin: 229px 0 18px; background: #858585; }
.diamond { position: absolute; left: -6px; top: 378px; width: 8px; height: 8px; fill: #fff; stroke: #111; stroke-width: 1; }

.canvas { display: flex; flex: 1; flex-direction: column; min-width: 0; background: #fff; }
.ink { flex: 1; width: 100%; min-height: 0; }
.stroke { fill: none; stroke: #050505; stroke-width: 8; stroke-linecap: round; stroke-linejoin: round; }
.stroke.red { stroke: #c90c12; }
.stroke.blue { stroke: #0808b4; }
.extend { flex: none; height: 45px; padding-top: 10px; text-align: center; color: #00007a; font: 15px/18px "Liberation Sans", sans-serif; }

.taskbar { display: flex; flex: none; height: 45px; border-top: 1px solid #aaa; background: #eee; }
.taskbar svg { width: 30px; height: 44px; }
.weather { width: 122px; padding-left: 16px; }
.pins, .tray { display: flex; }
.tray { margin-left: auto; padding-right: 11px; }
.open { background: linear-gradient(#f9f9f9, #f9f9f9) center 4px / 24px 36px no-repeat; }
.badge { font: 28px "Open Sans", sans-serif; fill: #fff; text-anchor: middle; }
.logo { font: bold 17px "Liberation Sans", sans-serif; fill: #fff; text-anchor: middle; }
.run { fill: #858585; }
.note { fill: #0870b8; }
.tr { fill: none; stroke: #222; stroke-width: 3; }
.taskbar .tight svg { width: 17px; }
.clock { display: flex; flex-direction: column; justify-content: center; width: 65px; text-align: right; line-height: 15px; }
```
